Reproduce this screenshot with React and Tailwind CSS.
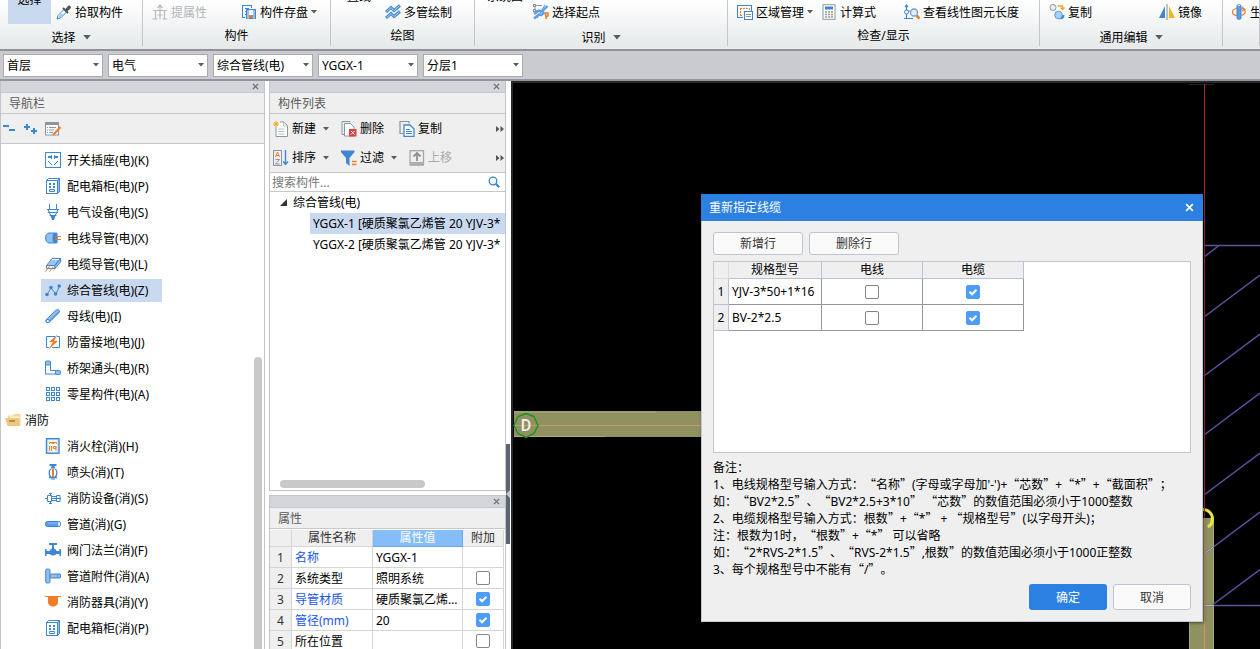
import React from "react";

const B = "#3f86d2";
const L = "#8fc0f2";
const O = "#f07c28";
const G = "#8a969e";

/* ---------- icons ---------- */

function Icon({ children, className = "h-4 w-4", crisp = false }) {
  return (
    <svg
      viewBox="0 0 16 16"
      className={`shrink-0 ${className}`}
      fill="none"
      shapeRendering={crisp ? "crispEdges" : "auto"}
      aria-hidden="true"
    >
      {children}
    </svg>
  );
}

const cabinet = (
  <Icon>
    <path d="M3.5.5h11v13l-2 2" stroke={B} />
    <path d="M12.5 2.5l2-2v13l-2 2z" fill={L} stroke={B} />
    <rect x="1.5" y="2.5" width="11" height="13" fill="#fff" stroke={B} />
    <path d="M1.500 2.500l2-2" stroke={B} />
    <path d="M4 5h2v2H4zM8 5h2v2H8zM4 8h2v2H4zM8 8h2v2H8z" fill={B} />
    <path d="M4.500 11.500h5v2h-5z" stroke={B} />
  </Icon>
);

const icons = {
  socket: (
    <Icon crisp>
      <rect x="0.500" y="0.500" width="15" height="15" stroke={B} />
      <path d="M3 4h2v2H3zM6 3h1v4H6zM9 3h1v4H9zM11 4h2v2h-2zM5 4h1v2H5zM10 4h1v2h-1z" fill={B} />
      <path d="M3 9h1v1H3zM4 10h1v1H4zM5 11h1v1H5zM6 12h1v1H6zM12 9h1v1h-1zM11 10h1v1h-1zM10 11h1v1h-1zM9 12h1v1H9z" fill={B} />
    </Icon>
  ),
  cabinet,
  device: (
    <Icon>
      <path d="M4.500 0v5.500M11.500 0v5.500M2 5.500h12M3 8.500h10M4.500 11.500h7M3 5.500l3 6.500M13 5.500l-3 6.500" stroke={B} />
      <path d="M5.500 12h5L9 16H7z" fill={B} />
    </Icon>
  ),
  conduit: (
    <Icon>
      <path d="M4 3h8v10H4C-.5 13-.5 3 4 3z" fill={L} stroke={B} />
      <ellipse cx="10" cy="8" rx="2.500" ry="5" fill={B} />
      <path d="M10 6.500h6M10 9.500h6" stroke={O} />
    </Icon>
  ),
  tray: (
    <Icon>
      <path d="M2 9l5-6.500h8.500L10 9z" fill="#fff" stroke={B} />
      <path d="M4 7h8M5.500 5h8" stroke={B} />
      <path d="M1.500 9.500h8.500v3H1.500z" fill="#e7f1fc" stroke={B} />
      <path d="M10 9.500l5.500-7v3.500l-5.500 6.500z" fill={L} stroke={B} />
      <path d="M.5 15.500l4-5M4.500 15.500l3.500-4.500M8.500 14.500l1-1" stroke={O} />
    </Icon>
  ),
  polyline: (
    <Icon>
      <path d="M2 12.500L6 6l5 6 3.500-8" stroke={B} strokeWidth="1" />
      <circle cx="2" cy="12.500" r="1.800" fill={B} />
      <circle cx="6" cy="5.500" r="1.800" fill={B} />
      <circle cx="10.500" cy="12" r="1.800" fill={B} />
      <circle cx="14.200" cy="4" r="1.800" fill={B} />
    </Icon>
  ),
  busbar: (
    <Icon>
      <path d="M1 12L11 2.200c2-1.500 4 .2 3.500 2L4.500 14C2 15.500.2 14 1 12z" fill={L} stroke={B} />
      <path d="M4 13.500L14 3.500" stroke={B} />
      <circle cx="2.800" cy="13" r="1.600" fill="#fff" stroke={B} />
    </Icon>
  ),
  lightning: (
    <Icon>
      <path d="M10 2.500H1.500v11H4M12 2.500h2.500v11H7" stroke={B} />
      <path d="M12.500.5L4 8h4L3.500 15.500 13 7H9z" fill={O} />
    </Icon>
  ),
  elbow: (
    <Icon>
      <path d="M.500 2.500v11.500h13M5.500 2.500v8h8" stroke={B} />
      <rect x="0.500" y="1" width="5" height="4" rx="1" fill={L} stroke={B} />
      <rect x="10.500" y="10.500" width="5" height="4" rx="1" fill={L} stroke={B} />
    </Icon>
  ),
  gridIcon: (
    <Icon crisp>
      {[1, 6, 11].map((y) =>
        [1, 6, 11].map((x) => <rect key={`${x}-${y}`} x={x + 0.5} y={y + 0.5} width="3" height="3" stroke={B} />)
      )}
    </Icon>
  ),
  hydrant: (
    <Icon>
      <rect x="1.500" y="0.700" width="12.500" height="14.500" fill="#dcebfb" stroke={B} strokeWidth="1.400" />
      <rect x="3.500" y="2.500" width="8.500" height="11" fill="#fff" />
      <path d="M4.500 6V4.500h7V6M6.500 5.500h3" stroke={O} />
      <path d="M4.500 8v5M6.500 8v5M8.500 8.500h2.500v2H8.500zM11 8v5" stroke={O} />
    </Icon>
  ),
  sprinkler: (
    <Icon>
      <path d="M4.500 1h7M6 3.500h4M8 1v3" stroke={B} strokeWidth="2" />
      <path d="M6 5C3.500 6 3.500 11 6 13M10 5c2.500 1 2.500 6 0 8M4 13.500h8" stroke={B} strokeWidth="1.300" />
      <path d="M7 5h2v8H7z" fill={O} />
      <path d="M6 15h4" stroke={B} />
    </Icon>
  ),
  fireDevice: (
    <Icon>
      <path d="M0 8.500h2.500M4 3.500h3M5.500 3.500v2M4 13.500h3M5.500 11.500v2M2.500 5.500h4v6h-4zM6.500 6.500h5M6.500 10.500h5M11.500 5.500h3.500v6h-3.500zM6.500 8.500H16" stroke={B} />
    </Icon>
  ),
  pipe: (
    <Icon>
      <rect x="0.500" y="5.500" width="15" height="5" rx="2" fill="#5aa0e8" stroke={B} />
      <path d="M3 7h9" stroke={L} />
      <ellipse cx="14" cy="8" rx="1.200" ry="2" fill="#dcebfb" />
    </Icon>
  ),
  valve: (
    <Icon>
      <path d="M4 2h8M8 2v6" stroke={B} strokeWidth="2" />
      <path d="M0 7h1.500v7H0zM14.500 7H16v7h-1.500zM1 9h14v3H1z" fill={B} />
      <circle cx="8" cy="10" r="3.500" fill={B} />
    </Icon>
  ),
  fitting: (
    <Icon>
      <rect x="0.700" y="1" width="4.300" height="14" rx="1.500" fill={L} stroke={B} />
      <rect x="5" y="6" width="10.500" height="4" rx="1" fill={L} stroke={B} />
      <path d="M5.500 6v4" stroke={O} />
      <ellipse cx="14" cy="8" rx="1.200" ry="1.500" fill="#fff" stroke={B} />
    </Icon>
  ),
  appliance: (
    <Icon>
      <path d="M0 2.500h16" stroke={O} />
      <path d="M3 3h10v5c0 6-10 6-10 0z" fill={O} />
    </Icon>
  ),
  folder: (
    <Icon>
      <path d="M3 3.500h5l1-1.500h6.500v12H3z" fill="#f3d594" />
      <path d="M5 4.500h9.500v2H5z" fill="#fff6dc" />
      <path d="M0 6h12.500l1.500 1 1 7H2.500z" fill="#ecc77c" />
      <path d="M4 9h6" stroke="#a77c30" strokeWidth="1.500" />
    </Icon>
  ),
  dropper: (
    <Icon>
      <path d="M1 15l1-3.500L8.500 5l2.500 2.500L4.500 14z" fill="#fff" stroke={B} />
      <path d="M2 14l2.500-3.500 3-1L4 13.500z" fill={L} />
      <path d="M7 4l5 5" stroke="#4d545b" strokeWidth="2" />
      <path d="M9 5.500L12 2c1-1.500 4 .5 2.500 2.500L11 7.500z" fill="#4d545b" />
    </Icon>
  ),
  extract: (
    <Icon>
      <path d="M8 1v14M5.500 4L8 1l2.500 3M1 6.500h14M3.500 6.500v9M12.500 6.500v9M5.500 11h5M.5 15h5M10.500 15H15" stroke="#b9bcbf" strokeWidth="1.200" />
    </Icon>
  ),
  save: (
    <Icon crisp>
      <path d="M4 13.500H1.500V1.500h9V4M4 4.500h4M4 7.500h1M4 10.500h1" stroke={B} />
      <path d="M5.500 5.500h9v9h-9z" fill="#fff" stroke={B} />
      <path d="M6 6h2v9H6zM12 6h2v9h-2z" fill={L} />
      <path d="M8 6h4v3H8z" fill="#fff" />
      <path d="M8 11h4v3H8z" fill={O} />
    </Icon>
  ),
  waves: (
    <Icon>
      <path d="M1 8l5-4.500 3 3 6-5M1 14l5-4.500 3 3 6-5" stroke={B} strokeWidth="3" />
      <path d="M1.500 7.700L6 3.500l3 3 5.500-4.700M1.500 13.700L6 9.500l3 3 5.500-4.700" stroke="#b5d7f8" strokeWidth="1" />
    </Icon>
  ),
  startPoint: (
    <Icon>
      <path d="M1 1.500h8M2 6.500h3M2 2v6" stroke={G} />
      <rect x="0.500" y="0.500" width="2" height="2" fill="#fff" stroke={G} />
      <rect x="0.500" y="5.500" width="2" height="2" fill="#fff" stroke={G} />
      <path d="M1 10l5-3.500 3 1L14.500 2M1 14.500l5-4 2.500.5 3-3" stroke="#5c9fe6" strokeWidth="2.400" />
      <path d="M4 14L12 1" stroke="#5c9fe6" strokeWidth="1.200" />
      <path d="M12 8.500l1.500 6.500M12 9h3v3l-2 .5" stroke={O} strokeWidth="1.600" />
    </Icon>
  ),
  region: (
    <Icon crisp>
      <path d="M.500 1.500h14v6M.500 1v12.500H6" stroke={B} />
      <path d="M3 4.500h9.500v2M3.500 4v7H6" stroke={O} strokeDasharray="2 1" />
      <rect x="7.500" y="7.500" width="8" height="8" fill="#fff" stroke={B} />
      <path d="M9 10.500h5M9 12.500h5" stroke={G} />
    </Icon>
  ),
  calc: (
    <Icon>
      <rect x="2" y="0.700" width="12" height="14.600" fill="#fff" stroke={G} />
      <path d="M4 2.500h8v3H4z" fill={B} />
      <path d="M4 8h2M7 8h2M10 8h2M4 13h2M7 13h2M10 13h2M4 10.500h2M7 10.500h2" stroke={G} strokeWidth="1.300" />
      <path d="M10 10.500h2" stroke={O} strokeWidth="1.300" />
    </Icon>
  ),
  inspect: (
    <Icon>
      <path d="M2.500 1v14M1 3l1.500-2L4 3M0 14.500h9M4 7h2" stroke={B} strokeWidth="1.200" />
      <circle cx="2.500" cy="8" r="2" fill="#fff" stroke={B} />
      <circle cx="10" cy="8.500" r="3.500" fill="#e0efff" stroke="#7e9cc7" strokeWidth="1.300" />
      <path d="M12.500 11.500l3 3" stroke={O} strokeWidth="2.600" />
    </Icon>
  ),
  copyRibbon: (
    <Icon>
      <circle cx="4" cy="3.500" r="3" fill="#eef0f1" stroke={G} />
      <path d="M8.500 2h5v3M11.500 3.500l2 2 2-2" stroke="#f5a41e" strokeWidth="1.300" />
      <path d="M12 11l3.500 0c0 5-5 5-7 3z" fill={B} />
      <circle cx="9.500" cy="11" r="3.800" fill="#a9d0f7" stroke="#5c9fe6" />
    </Icon>
  ),
  mirror: (
    <Icon>
      <path d="M0 14L6 2v12z" fill={B} />
      <path d="M8 0v16" stroke="#808a90" />
      <path d="M10 2l6 12h-6z" fill="#fbb216" />
    </Icon>
  ),
  rotate: (
    <Icon>
      <path d="M6 4.500C0 5 0 11 6 11.500M10.500 4.500c5 1 5 5 0 7M11 3l3 2.500-3 1.500" stroke={O} strokeWidth="1.200" />
      <rect x="6" y="0.700" width="4" height="14.600" rx="1.500" fill="#5a9fe6" stroke={B} />
      <path d="M7 1.500h2" stroke="#dcebfb" />
    </Icon>
  ),
  collapse: (
    <Icon crisp>
      <path d="M2 4h6v2H2zM8 8h6v2H8z" fill={B} />
    </Icon>
  ),
  expand: (
    <Icon crisp>
      <path d="M3 3h2v2h2v2H5v2H3V7H1V5h2zM10 7h2v2h2v2h-2v2h-2v-2H8V9h2z" fill={B} />
    </Icon>
  ),
  editList: (
    <Icon>
      <rect x="0.500" y="2" width="13" height="12" fill="#fff" stroke={G} />
      <path d="M0 1h14v3H0z" fill={G} />
      <path d="M2 6.500h1M4 6.500h7M2 9h1M4 9h5M2 11.500h1M4 11.500h4" stroke={G} />
      <path d="M8 14l7.500-8" stroke={O} strokeWidth="2" />
    </Icon>
  ),
  newDoc: (
    <Icon>
      <path d="M3 6v9.500h11.500v-11L10.500 1H7" fill="#fff" stroke={G} />
      <path d="M10.500 1v4h4M5.500 8h6M5.500 10.500h6M5.500 13h6" stroke="#b8c0c5" />
      <path d="M3 0v6M0 3h6M1 1l4 4M5 1L1 5" stroke="#f5a41e" />
    </Icon>
  ),
  deleteDoc: (
    <Icon>
      <path d="M3 13.500H1V.5h8v1" stroke={G} />
      <path d="M3.500 2.500h6l3.500 3.500v9H3.500z" fill="#fff" stroke={G} />
      <path d="M8 8h7.500v7.500H8z" fill="#d64545" />
      <path d="M10 10l3.500 3.500M13.500 10L10 13.500" stroke="#fff" />
    </Icon>
  ),
  copyDoc: (
    <Icon>
      <path d="M4 12.500H1V.5h9v2" stroke={G} strokeWidth="1.200" />
      <path d="M5 4h6l4 4v7.500H5z" fill="#fff" stroke={B} strokeWidth="1.300" />
      <path d="M7 8.500h4M7 10.500h6M7 12.500h6" stroke={B} />
    </Icon>
  ),
  sort: (
    <Icon>
      <rect x="0.500" y="0.500" width="8" height="15" stroke={G} />
      <path d="M2.500 7l2-5 2 5M3 5.500h3" stroke={O} />
      <path d="M2.500 9.500h4l-4 4.500h4" stroke={G} />
      <path d="M12.500 0v14M10 11.500l2.500 3 2.500-3" stroke={B} strokeWidth="1.400" />
    </Icon>
  ),
  filter: (
    <Icon>
      <path d="M0 .5h13.500v1.500L8.500 8v8L5 13V8L0 2z" fill={B} />
      <path d="M11 11.500h4.500M11 14.500h4.500" stroke={O} strokeWidth="1.500" />
    </Icon>
  ),
  moveUp: (
    <Icon>
      <rect x="1" y="0.700" width="13.500" height="12" stroke="#a4a7aa" strokeWidth="1.300" />
      <path d="M.5 14.500H15" stroke="#a4a7aa" strokeWidth="2.500" />
      <path d="M8 11V4M4.500 6.500L8 3l3.500 3.500" stroke="#8d9093" strokeWidth="1.800" />
    </Icon>
  ),
};

function Caret({ className = "h-[4px] w-[6px]" }) {
  return (
    <svg viewBox="0 0 6 4" className={`shrink-0 ${className}`} aria-hidden="true">
      <path d="M0 0h6L3 3.500z" fill="#5b5b5b" />
    </svg>
  );
}

function Cross({ className }) {
  return (
    <svg viewBox="0 0 8 8" className={className} fill="none" stroke="currentColor" aria-hidden="true">
      <path d="M1 1l6 6M7 1L1 7" strokeWidth="1.500" />
    </svg>
  );
}

/* ---------- ribbon ---------- */

function RibbonGroup({ label, menu, className, children }) {
  return (
    <section className={`flex h-[46px] flex-col border-r border-[#c4c6c9] ${className}`}>
      <div className="flex h-6 items-center whitespace-nowrap">{children}</div>
      <div className={`flex items-center justify-center gap-[7px] ${menu ? "pt-[5px]" : "pt-[3px]"}`}>
        {label}
        {menu && <Caret className="h-[5px] w-[8px]" />}
      </div>
    </section>
  );
}

function RibbonItem({ icon, children, menu, disabled, className = "" }) {
  return (
    <button disabled={disabled} className={`flex shrink-0 items-center gap-[3px] disabled:text-[#b3b5b7] ${className}`}>
      {icons[icon]}
      <span>{children}</span>
      {menu && <Caret />}
    </button>
  );
}

function CutLabel({ children, className = "" }) {
  return (
    <span className={`flex h-6 shrink-0 items-start overflow-hidden ${className}`}>
      <span className="-mt-3">{children}</span>
    </span>
  );
}

function Ribbon() {
  return (
    <header className="flex h-[51px] shrink-0 overflow-hidden border-b-2 border-[#8f9297] bg-gradient-to-b from-white to-[#e5e9ea]">
      <RibbonGroup label="选择" menu className="w-[143px] shrink-0">
        <button className="ml-2 mr-[5px] flex h-6 w-[43px] shrink-0 justify-center overflow-hidden bg-[#c9d9f0]">
          <span className="-mt-[9px]">选择</span>
        </button>
        <RibbonItem icon="dropper">拾取构件</RibbonItem>
      </RibbonGroup>
      <RibbonGroup label="构件" className="w-[188px] shrink-0">
        <RibbonItem icon="extract" disabled className="ml-[9px]">提属性</RibbonItem>
        <RibbonItem icon="save" menu className="ml-[34px]">构件存盘</RibbonItem>
      </RibbonGroup>
      <RibbonGroup label="绘图" className="w-[144px] shrink-0">
        <CutLabel className="ml-4">直线</CutLabel>
        <RibbonItem icon="waves" className="ml-[14px]">多管绘制</RibbonItem>
      </RibbonGroup>
      <RibbonGroup label="识别" menu className="w-[253px] shrink-0">
        <CutLabel className="ml-3">系统图</CutLabel>
        <RibbonItem icon="startPoint" className="ml-[10px]">选择起点</RibbonItem>
      </RibbonGroup>
      <RibbonGroup label="检查/显示" className="w-[312px] shrink-0">
        <RibbonItem icon="region" menu className="ml-[9px]">区域管理</RibbonItem>
        <RibbonItem icon="calc" className="ml-[8px]">计算式</RibbonItem>
        <RibbonItem icon="inspect" className="ml-[28px]">查看线性图元长度</RibbonItem>
      </RibbonGroup>
      <RibbonGroup label="通用编辑" menu className="w-[183px] shrink-0">
        <RibbonItem icon="copyRibbon" className="ml-[9px]">复制</RibbonItem>
        <RibbonItem icon="mirror" className="ml-[67px]">镜像</RibbonItem>
      </RibbonGroup>
      <RibbonGroup className="min-w-0 flex-1 overflow-hidden">
        <RibbonItem icon="rotate" className="ml-2">生成</RibbonItem>
      </RibbonGroup>
    </header>
  );
}

function Picker({ label, value }) {
  return (
    <div className="grid w-[100px] items-center">
      <select
        aria-label={label}
        defaultValue={value}
        className="col-start-1 row-start-1 h-[23px] w-full appearance-none rounded-none border border-[#a9abaf] bg-white pl-[3px] outline-none"
      >
        <option>{value}</option>
      </select>
      <Caret className="pointer-events-none col-start-1 row-start-1 mr-1 h-[4px] w-[6px] justify-self-end" />
    </div>
  );
}

/* ---------- panels ---------- */

function PanelHead({ title }) {
  return (
    <>
      <div className="flex h-[11px] shrink-0 items-center justify-end bg-[#d4d5db] pr-[5px] text-[#6d6f74]">
        <button aria-label={`关闭${title}`}>
          <Cross className="h-[7px] w-[7px]" />
        </button>
      </div>
      <h2 className="flex h-[22px] shrink-0 items-center border-y border-[#c6c8cd] bg-[#efefef] pl-2 text-[#5b5b5b]">{title}</h2>
    </>
  );
}

const electric = [
  ["socket", "开关插座(电)(K)"],
  ["cabinet", "配电箱柜(电)(P)"],
  ["device", "电气设备(电)(S)"],
  ["conduit", "电线导管(电)(X)"],
  ["tray", "电缆导管(电)(L)"],
  ["polyline", "综合管线(电)(Z)", true],
  ["busbar", "母线(电)(I)"],
  ["lightning", "防雷接地(电)(J)"],
  ["elbow", "桥架通头(电)(R)"],
  ["gridIcon", "零星构件(电)(A)"],
];

const fire = [
  ["hydrant", "消火栓(消)(H)"],
  ["sprinkler", "喷头(消)(T)"],
  ["fireDevice", "消防设备(消)(S)"],
  ["pipe", "管道(消)(G)"],
  ["valve", "阀门法兰(消)(F)"],
  ["fitting", "管道附件(消)(A)"],
  ["appliance", "消防器具(消)(Y)"],
  ["cabinet", "配电箱柜(消)(P)"],
];

function NavRow({ item: [icon, text, selected] }) {
  return (
    <li className="flex h-[26px] items-center pl-10">
      <a href="#" className={`flex h-[23px] items-center gap-[6px] pl-1 pr-[14px] ${selected ? "bg-[#c9d9f0]" : ""}`}>
        {icons[icon]}
        {text}
      </a>
    </li>
  );
}

function Navigator() {
  return (
    <nav className="flex w-[265px] shrink-0 flex-col overflow-hidden border-x border-[#c2c4c9]">
      <PanelHead title="导航栏" />
      <div className="flex h-[30px] shrink-0 items-center gap-[6px] border-b border-[#c6c8cd] bg-[#efefef]">
        <button aria-label="全部折叠">{icons.collapse}</button>
        <button aria-label="全部展开">{icons.expand}</button>
        <button aria-label="编辑">{icons.editList}</button>
      </div>
      <div className="flex min-h-0 flex-1">
        <ul className="min-w-0 flex-1 pt-[3px]">
          {electric.map((item) => <NavRow key={item[1]} item={item} />)}
          <li className="flex h-[26px] items-center gap-1 pl-1">
            {icons.folder}
            消防
          </li>
          {fire.map((item) => <NavRow key={item[1]} item={item} />)}
        </ul>
        <div className="flex w-[10px] flex-col pt-[213px]">
          <div className="w-2 flex-1 rounded-t-full bg-[#c9c9c9]" />
        </div>
      </div>
    </nav>
  );
}

function ToolButton({ icon, children, menu, disabled, className = "" }) {
  return (
    <button disabled={disabled} className={`flex shrink-0 items-center gap-[3px] disabled:text-[#a9a9a9] ${className}`}>
      {icons[icon]}
      {children}
      {menu && <Caret className="ml-1 h-[4px] w-[6px]" />}
    </button>
  );
}

function More() {
  return (
    <button aria-label="更多" className="ml-auto pr-px">
      <svg viewBox="0 0 8 6" className="h-[6px] w-[8px]" aria-hidden="true">
        <path d="M0 0l3.500 3L0 6zM4.500 0L8 3 4.500 6z" fill="#555" />
      </svg>
    </button>
  );
}

function ComponentList() {
  return (
    <section className="flex h-[410px] shrink-0 flex-col overflow-hidden border-x border-b border-[#c2c4c9]">
      <PanelHead title="构件列表" />
      <div className="flex h-[59px] shrink-0 flex-col border-b border-[#c6c8cd] bg-[#efefef] pl-[3px]">
        <div className="flex h-[29px] items-center">
          <ToolButton icon="newDoc" menu>新建</ToolButton>
          <ToolButton icon="deleteDoc" className="ml-[12px]">删除</ToolButton>
          <ToolButton icon="copyDoc" className="ml-[15px]">复制</ToolButton>
          <More />
        </div>
        <div className="flex h-[29px] items-center">
          <ToolButton icon="sort" menu>排序</ToolButton>
          <ToolButton icon="filter" menu className="ml-[12px]">过滤</ToolButton>
          <ToolButton icon="moveUp" disabled className="ml-[12px]">上移</ToolButton>
          <More />
        </div>
      </div>
      <div className="flex h-[19px] shrink-0 items-center border-b border-[#c6c8cd] pl-[2px] pr-[5px]">
        <input aria-label="搜索构件" placeholder="搜索构件..." className="min-w-0 flex-1 outline-none placeholder:text-[#777]" />
        <svg viewBox="0 0 12 12" className="h-[12px] w-[12px]" fill="none" stroke="#2f86cf" aria-hidden="true">
          <circle cx="5" cy="5" r="3.800" strokeWidth="1.300" />
          <path d="M7.800 7.800l3.400 3.400" strokeWidth="2" />
        </svg>
      </div>
      <ul className="flex-1 overflow-hidden whitespace-nowrap">
        <li>
          <div className="flex h-[21px] items-center gap-[6px] pl-[10px]">
            <svg viewBox="0 0 7 7" className="h-[7px] w-[7px]" aria-hidden="true">
              <path d="M7 0v7H0z" fill="#333" />
            </svg>
            综合管线(电)
          </div>
          <ul className="pl-10">
            <li className="flex h-[21px] items-center bg-[#c9d9f0] pl-[3px]">YGGX-1 [硬质聚氯乙烯管 20 YJV-3*</li>
            <li className="flex h-[21px] items-center pl-[3px]">YGGX-2 [硬质聚氯乙烯管 20 YJV-3*</li>
          </ul>
        </li>
      </ul>
      <div className="mb-[2px] ml-[10px] h-2 w-[145px] shrink-0 rounded-full bg-[#c9c9c9]" />
    </section>
  );
}

function CheckBox({ label, checked }) {
  return (
    <span className="inline-grid align-middle">
      <input
        type="checkbox"
        aria-label={label}
        defaultChecked={checked}
        className="peer col-start-1 row-start-1 h-[14px] w-[14px] appearance-none rounded-[2px] border border-[#858585] bg-white checked:border-[#4c9cf8] checked:bg-[#4c9cf8]"
      />
      <svg
        viewBox="0 0 14 14"
        className="pointer-events-none col-start-1 row-start-1 hidden h-[14px] w-[14px] peer-checked:block"
        fill="none"
        stroke="#fff"
        strokeWidth="2"
        aria-hidden="true"
      >
        <path d="M3.500 6.800L6 9.300l4.500-4.600" />
      </svg>
    </span>
  );
}

const properties = [
  { name: "名称", value: "YGGX-1", link: true },
  { name: "系统类型", value: "照明系统", check: false },
  { name: "导管材质", value: "硬质聚氯乙烯管", link: true, check: true },
  { name: "管径(mm)", value: "20", link: true, check: true },
  { name: "所在位置", value: "", check: false },
];

function Properties() {
  return (
    <section className="mt-1 flex min-h-0 flex-1 flex-col overflow-hidden border-x border-t border-[#c2c4c9]">
      <PanelHead title="属性" />
      <div className="pr-px pt-px">
        <table className="w-full table-fixed border-separate border-spacing-0 text-left">
          <thead>
            <tr className="h-[17px] bg-[#efefef] text-center leading-4 text-[#333]">
              <th className="w-[22px] border-b border-r border-[#d5d5d5] p-0" />
              <th className="w-[81px] border-b border-r border-[#d5d5d5] p-0 font-normal">属性名称</th>
              <th className="border-b border-r border-[#6aa7ea] bg-[#85bdfb] p-0 font-normal text-white">属性值</th>
              <th className="w-[41px] border-b border-r border-[#d5d5d5] p-0 font-normal">附加</th>
            </tr>
          </thead>
          <tbody>
            {properties.map((p, i) => (
              <tr key={p.name} className="h-[21px]">
                <td className="border-b border-r border-[#d5d5d5] bg-[#efefef] p-0 text-center text-[#333]">{i + 1}</td>
                <td className={`border-b border-r border-[#d5d5d5] py-0 pl-[3px] pr-0 ${p.link ? "text-[#1a56f0]" : ""}`}>{p.name}</td>
                <td className="truncate border-b border-r border-[#d5d5d5] py-0 pl-[3px] pr-[3px]">{p.value}</td>
                <td className="border-b border-r border-[#d5d5d5] p-0 text-center leading-none">
                  {p.check !== undefined && <CheckBox label={`附加 ${p.name}`} checked={p.check} />}
                </td>
              </tr>
            ))}
          </tbody>
        </table>
      </div>
    </section>
  );
}

/* ---------- drawing canvas ---------- */

const hatch = [317, 376, 435, 495, 554];

function Canvas() {
  return (
    <main className="relative min-w-0 flex-1 overflow-hidden border-l-2 border-t-2 border-[#26282b] bg-black">
      <svg className="absolute left-0 top-0" width="747" height="566" viewBox="513 83 747 566" fill="none" role="img" aria-label="平面图">
        <rect x="514" y="411" width="200" height="26" fill="#8f9260" />
        <path d="M514 412H656M514 436.500H605" stroke="#aaad72" />
        <path d="M514 425.500H714" stroke="#c59a68" />
        <path d="M526 413.500l8 3 4 9-4 8-8 4-8-4-4-8 4-9z" stroke="#1f8f1f" strokeWidth="1.400" />
        <text x="526" y="431" textAnchor="middle" fontSize="16" fontWeight="500" fill="#f2f2f2" className="font-['Roboto',sans-serif]">D</text>
        <circle cx="1203" cy="519" r="9.500" stroke="#e6e640" strokeWidth="3" />
        <rect x="1189" y="518" width="25" height="131" fill="#8f9260" />
        <path d="M1189.500 518v131M1213.500 518v131" stroke="#aaad72" />
        <path d="M1212 518c1 4-1 7-4 9" stroke="#e6e640" strokeWidth="3" />
        <path d="M1189 84.500h25" stroke="#26281c" />
        <path d="M1204 245.500h56M1204 605.500h56" stroke="#57549f" strokeWidth="1.500" />
        <path d="M1204 257l15-11.500" stroke="#57549f" strokeWidth="1.500" />
        {hatch.map((y) => (
          <path key={y} d={`M1204 ${y}l56-42`} stroke="#57549f" strokeWidth="1.500" />
        ))}
        <path d="M1204 554l10-7.500M1204 605.500h10" stroke="#bdbdac" />
        <path d="M1213 604.500l47-35" stroke="#57549f" strokeWidth="1.500" />
        <path d="M1204.500 84v434" stroke="#a82a2a" />
        <path d="M1204.500 518v131" stroke="#d09566" />
      </svg>
    </main>
  );
}

/* ---------- dialog ---------- */

const specs = [
  { model: "YJV-3*50+1*16", wire: false, cable: true },
  { model: "BV-2*2.5", wire: false, cable: true },
];

const notes = [
  "备注：",
  "1、电线规格型号输入方式：“名称”(字母或字母加'-')+“芯数”+“*”+“截面积”；",
  "如：“BV2*2.5”、“BV2*2.5+3*10” “芯数”的数值范围必须小于1000整数",
  "2、电缆规格型号输入方式：根数”+“*” + “规格型号”(以字母开头)；",
  "注：根数为1时，“根数”+“*” 可以省略",
  "如：“2*RVS-2*1.5”、“RVS-2*1.5”,根数”的数值范围必须小于1000正整数",
  "3、每个规格型号中不能有“/”。",
];

/* Curly quotes take the full-width form of the Chinese font. */
function ChineseLine({ text }) {
  return (
    <p>
      {text.split(/([“”])/).map((part, i) =>
        part === "“" || part === "”" ? (
          <span key={i} className="font-['Noto_Sans_CJK_SC',sans-serif] leading-none">{part}</span>
        ) : (
          part
        )
      )}
    </p>
  );
}

function ReassignDialog() {
  const plain = "rounded-[3px] border border-[#bcc5d6] bg-[#fafafa] text-[#333]";
  return (
    <div
      role="dialog"
      aria-labelledby="dialog-title"
      className="absolute left-[701px] top-[194px] w-[502px] bg-[#efefef] shadow-[1px_1px_3px_rgba(0,0,0,0.5)]"
    >
      <div className="flex h-[27px] items-center justify-between bg-[#2c80e2] pl-2 pr-[9px] text-white">
        <h2 id="dialog-title">重新指定线缆</h2>
        <button aria-label="关闭">
          <Cross className="h-[9px] w-[9px]" />
        </button>
      </div>
      <div className="border-x border-b border-[#c2c9d4] px-[11px] pb-[11px] pt-[11px]">
        <div className="flex gap-[6px]">
          <button className={`h-[23px] w-[90px] ${plain}`}>新增行</button>
          <button className={`h-[23px] w-[90px] ${plain}`}>删除行</button>
        </div>
        <div className="mt-[6px] h-[192px] border border-[#c0c5d0] bg-white">
          <table className="table-fixed border-separate border-spacing-0">
            <thead>
              <tr className="h-[17px] bg-[#efefef] leading-4">
                <th className="w-[15px] border-b border-r border-[#dcdcdc] p-0" />
                <th className="w-[93px] border-b border-r border-[#b9c3d8] p-0 font-normal">规格型号</th>
                <th className="w-[101px] border-b border-r border-[#b9c3d8] p-0 font-normal">电线</th>
                <th className="w-[101px] border-b border-r border-[#b9c3d8] p-0 font-normal">电缆</th>
              </tr>
            </thead>
            <tbody>
              {specs.map((s, i) => (
                <tr key={s.model} className="h-[26px]">
                  <td className="border-b border-r border-[#b9c3d8] bg-[#efefef] p-0 text-center">{i + 1}</td>
                  <td className="whitespace-nowrap border-b border-r border-[#969696] py-0 pl-[3px] pr-0">{s.model}</td>
                  <td className="border-b border-r border-[#969696] p-0 text-center leading-none">
                    <CheckBox label={`${s.model} 电线`} checked={s.wire} />
                  </td>
                  <td className="border-b border-r border-[#969696] p-0 text-center leading-none">
                    <CheckBox label={`${s.model} 电缆`} checked={s.cable} />
                  </td>
                </tr>
              ))}
            </tbody>
          </table>
        </div>
        <div className="mt-[6px] whitespace-nowrap leading-[17px] [text-spacing-trim:space-all]">
          {notes.map((n) => <ChineseLine key={n} text={n} />)}
        </div>
        <div className="mt-[6px] flex justify-end gap-[6px]">
          <button className="h-[26px] w-[78px] rounded-[3px] bg-[#2c80e2] text-white">确定</button>
          <button className={`h-[26px] w-[78px] ${plain}`}>取消</button>
        </div>
      </div>
    </div>
  );
}

export default function App() {
  return (
    <div
      lang="zh-CN"
      className="relative flex h-screen flex-col overflow-hidden bg-white font-['Noto_Sans','Noto_Sans_CJK_SC',sans-serif] text-[12px] leading-[17px] text-black"
    >
      <Ribbon />
      <div className="flex h-[30px] shrink-0 items-center gap-[5px] border-b-2 border-[#92969c] bg-[#c9cbd0] pl-[3px]">
        <Picker label="楼层" value="首层" />
        <Picker label="专业" value="电气" />
        <Picker label="构件类型" value="综合管线(电)" />
        <Picker label="构件" value="YGGX-1" />
        <Picker label="分层" value="分层1" />
      </div>
      <div className="flex min-h-0 flex-1">
        <Navigator />
        <div className="ml-1 flex w-[237px] shrink-0 flex-col">
          <ComponentList />
          <Properties />
        </div>
        <div className="flex w-[5px] shrink-0 flex-col pt-[363px]">
          <button aria-label="收起面板" className="flex h-[100px] w-[4px] items-center justify-center bg-[#5b6472]">
            <svg viewBox="0 0 4 8" className="h-[8px] w-[4px]" aria-hidden="true">
              <path d="M4 0v8L0 4z" fill="#c4c8ce" />
            </svg>
          </button>
        </div>
        <Canvas />
      </div>
      <ReassignDialog />
    </div>
  );
}
